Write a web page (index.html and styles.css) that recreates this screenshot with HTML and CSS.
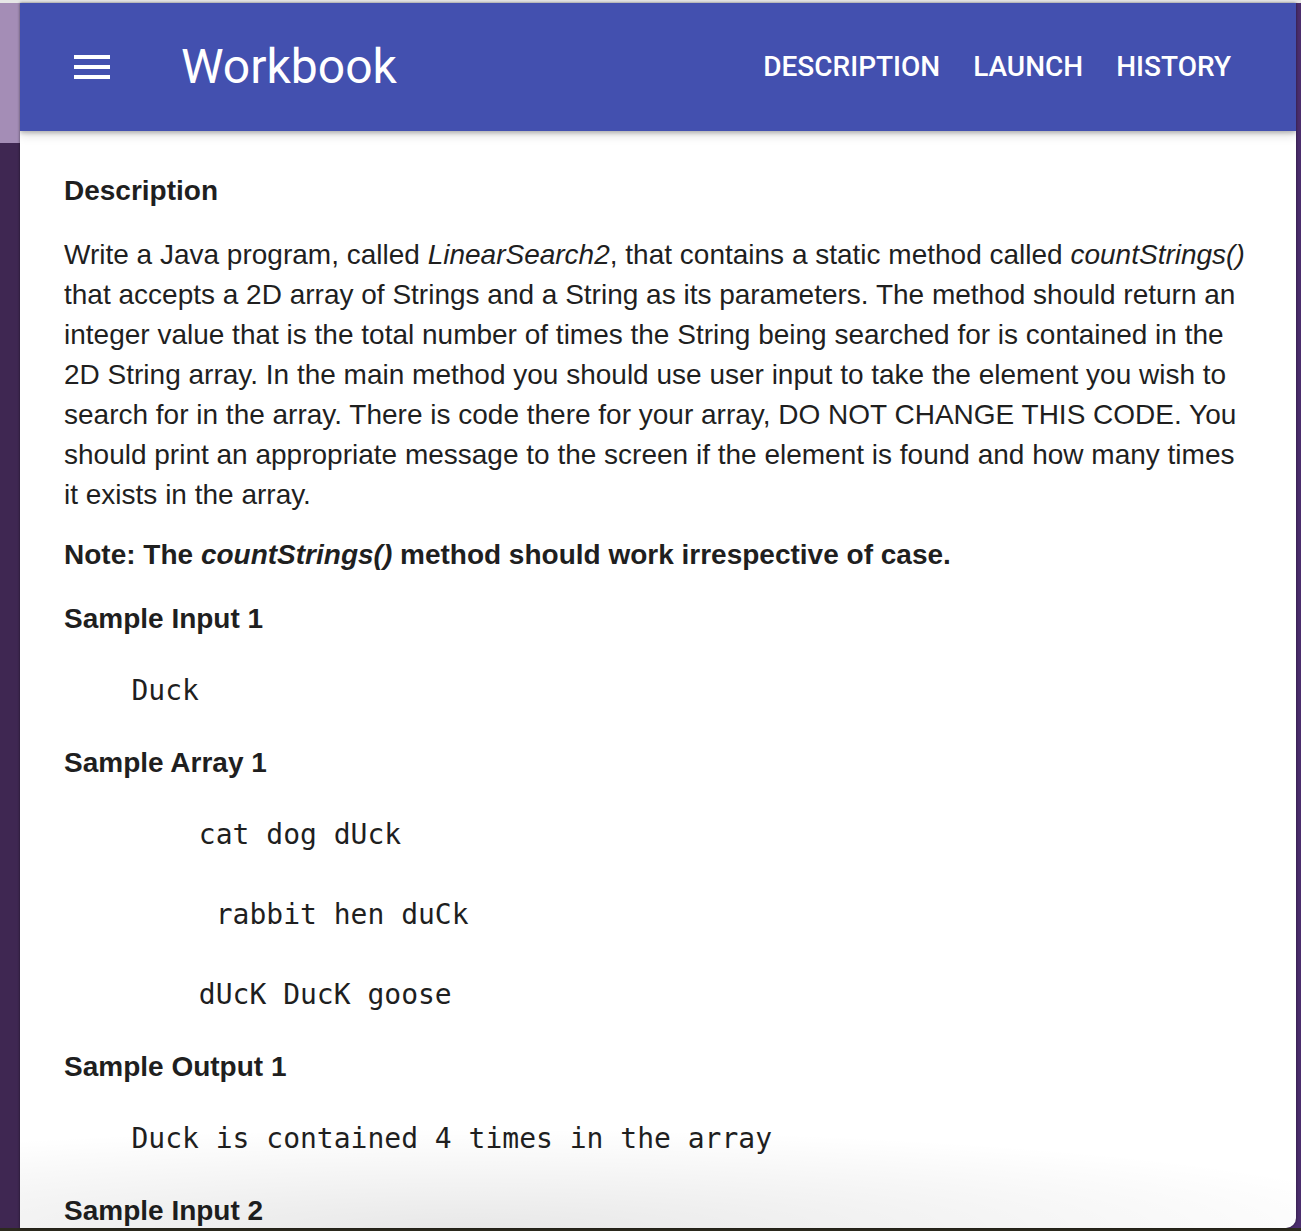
FILE: index.html
```html
<!DOCTYPE html>
<html lang="en">
<head>
<meta charset="utf-8">
<title>Workbook</title>
<link rel="stylesheet" href="styles.css">
</head>
<body>
<div class="window">
  <header class="appbar">
    <button class="menu-btn" aria-label="Menu">
      <svg width="36" height="24" viewBox="0 0 36 24"><rect x="0" y="0" width="36" height="4" fill="#fff"/><rect x="0" y="10" width="36" height="4" fill="#fff"/><rect x="0" y="20" width="36" height="4" fill="#fff"/></svg>
    </button>
    <div class="title">Workbook</div>
    <nav class="nav">
      <a class="nav-item">DESCRIPTION</a>
      <a class="nav-item">LAUNCH</a>
      <a class="nav-item">HISTORY</a>
    </nav>
  </header>
  <main class="content">
    <h3 class="heading">Description</h3>
    <p class="para">Write a Java program, called <em>LinearSearch2</em>, that contains a static method called <em>countStrings()</em> that accepts a 2D array of Strings and a String as its parameters. The method should return an integer value that is the total number of times the String being searched for is contained in the 2D String array. In the main method you should use user input to take the element you wish to search for in the array. There is code there for your array, DO NOT CHANGE THIS CODE. You should print an appropriate message to the screen if the element is found and how many times it exists in the array.</p>
    <p class="note"><strong>Note: The <em>countStrings()</em> method should work irrespective of case.</strong></p>
    <h3 class="heading">Sample Input 1</h3>
    <pre class="code">    Duck</pre>
    <h3 class="heading">Sample Array 1</h3>
    <pre class="code">        cat dog dUck

         rabbit hen duCk

        dUcK DucK goose</pre>
    <h3 class="heading">Sample Output 1</h3>
    <pre class="code">    Duck is contained 4 times in the array</pre>
    <h3 class="heading">Sample Input 2</h3>
  </main>
</div>
</body>
</html>
```

FILE: styles.css
```css
html, body {
  margin: 0;
  height: 1231px;
  overflow: hidden;
}
body {
  background:
    linear-gradient(#e6e6e6, #e6e6e6) 0 0 / 100% 3px no-repeat,
    linear-gradient(#2c2a1e, #2c2a1e) 0 100% / 100% 3px no-repeat,
    linear-gradient(to bottom, #a48db6 0, #a48db6 143px, #3f2752 143px) 0 0 / 20px 100% no-repeat,
    #4b2d6d;
  font-family: "Liberation Sans", Arial, sans-serif;
  color: #1f1f1f;
}
.window {
  position: relative;
  margin: 3px 5px 0 20px;
  height: 1225px;
  background: #fff;
  overflow: hidden;
  border-bottom-right-radius: 10px;
  box-shadow: 0 0 3px rgba(0,0,0,0.55);
}
.window::after {
  content: "";
  position: absolute;
  left: 0;
  right: 0;
  bottom: 0;
  height: 100px;
  pointer-events: none;
  background: radial-gradient(ellipse 75% 100% at 35% 100%, rgba(0,0,0,0.09), rgba(0,0,0,0) 100%);
}
.appbar {
  position: relative;
  z-index: 2;
  height: 128px;
  background: #4350af;
  display: flex;
  align-items: center;
  padding: 0 49px 0 54px;
  box-shadow: 0 2px 4px rgba(0,0,0,0.22), 0 4px 10px rgba(0,0,0,0.14);
  font-family: Roboto, "Liberation Sans", sans-serif;
  color: #fff;
}
.menu-btn {
  background: none;
  border: 0;
  padding: 0;
  width: 36px;
  height: 24px;
  display: block;
}
.menu-btn svg { display: block; }
.title {
  margin-left: 71px;
  font-size: 48px;
  font-weight: 400;
  line-height: 1;
}
.nav {
  margin-left: auto;
  display: flex;
}
.nav-item {
  padding: 0 16.5px;
  font-size: 28px;
  font-weight: 500;
  line-height: 1;
  margin-top: -1px;
}
.nav-item:last-child { padding-right: 16px; }
.content {
  padding: 40px 44px 0 44px;
}
.heading {
  margin: 0 0 24px;
  font-size: 28px;
  line-height: 40px;
  font-weight: 700;
}
.para {
  margin: 0 0 20px;
  font-size: 28px;
  line-height: 40px;
}
.note {
  margin: 0 0 24px;
  font-size: 28px;
  line-height: 40px;
}
.code {
  margin: 32px 0;
  font-family: "DejaVu Sans Mono", "Liberation Mono", monospace;
  font-size: 28px;
  line-height: 40px;
}
```
